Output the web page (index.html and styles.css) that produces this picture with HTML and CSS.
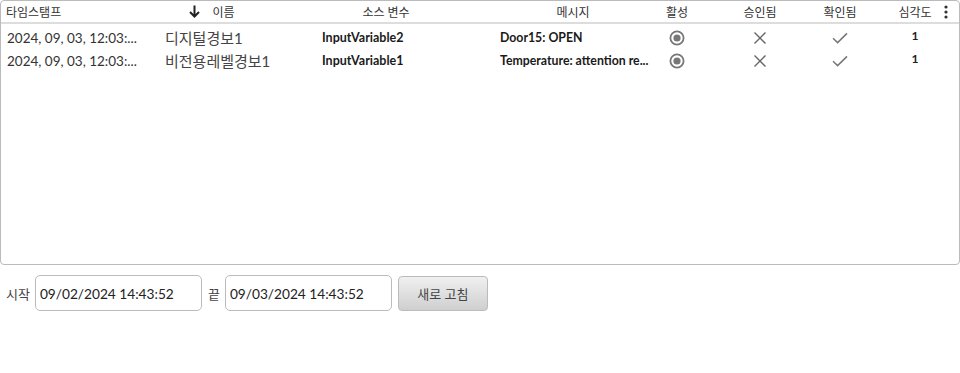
FILE: index.html
```html
<!DOCTYPE html>
<html lang="ko">
<head>
    <meta charset="UTF-8">
    <title>알람 저널</title>
    <link rel="stylesheet" href="styles.css">
</head>
<body>
    <div class="journal">
        <div class="row head">
            <div class="cell h-ts">타임스탬프</div>
            <div class="cell h-name">
                <svg class="arrow" width="11" height="13" viewBox="0 0 11 13"><path d="M5.5 0.5 L5.5 11.5 M1 7 L5.5 11.5 L10 7" stroke="#222" stroke-width="2" fill="none"/></svg>
                이름
            </div>
            <div class="cell h-src">소스 변수</div>
            <div class="cell h-msg">메시지</div>
            <div class="cell center">활성</div>
            <div class="cell center">승인됨</div>
            <div class="cell center">확인됨</div>
            <div class="cell center">심각도</div>
            <span class="kebab">
                <svg width="4" height="14" viewBox="0 0 4 14"><circle cx="2" cy="2" r="1.6" fill="#333"/><circle cx="2" cy="7" r="1.6" fill="#333"/><circle cx="2" cy="12" r="1.6" fill="#333"/></svg>
            </span>
        </div>

        <div class="rows">
            <div class="row">
                <div class="cell ts">2024, 09, 03, 12:03:...</div>
                <div class="cell name">디지털경보1</div>
                <div class="cell src">InputVariable2</div>
                <div class="cell msg">Door15: OPEN</div>
                <div class="cell center">
                    <svg width="16" height="16" viewBox="0 0 16 16"><circle cx="8" cy="8" r="6.6" fill="none" stroke="#777" stroke-width="1.8"/><circle cx="8" cy="8" r="3.6" fill="#777"/></svg>
                </div>
                <div class="cell center">
                    <svg width="14" height="14" viewBox="0 0 14 14"><path d="M1.5 1.5 L12.5 12.5 M12.5 1.5 L1.5 12.5" stroke="#666" stroke-width="1.4" fill="none"/></svg>
                </div>
                <div class="cell center">
                    <svg width="16" height="12" viewBox="0 0 16 12"><path d="M1 6.2 L5.6 10.6 L15 1.4" stroke="#777" stroke-width="1.5" fill="none"/></svg>
                </div>
                <div class="cell center sev">1</div>
            </div>
            <div class="row">
                <div class="cell ts">2024, 09, 03, 12:03:...</div>
                <div class="cell name">비전용레벨경보1</div>
                <div class="cell src">InputVariable1</div>
                <div class="cell msg">Temperature: attention re...</div>
                <div class="cell center">
                    <svg width="16" height="16" viewBox="0 0 16 16"><circle cx="8" cy="8" r="6.6" fill="none" stroke="#777" stroke-width="1.8"/><circle cx="8" cy="8" r="3.6" fill="#777"/></svg>
                </div>
                <div class="cell center">
                    <svg width="14" height="14" viewBox="0 0 14 14"><path d="M1.5 1.5 L12.5 12.5 M12.5 1.5 L1.5 12.5" stroke="#666" stroke-width="1.4" fill="none"/></svg>
                </div>
                <div class="cell center">
                    <svg width="16" height="12" viewBox="0 0 16 12"><path d="M1 6.2 L5.6 10.6 L15 1.4" stroke="#777" stroke-width="1.5" fill="none"/></svg>
                </div>
                <div class="cell center sev">1</div>
            </div>
        </div>
    </div>

    <div class="range">
        <label class="lbl">시작</label>
        <input class="field" type="text" value="09/02/2024 14:43:52">
        <label class="lbl">끝</label>
        <input class="field" type="text" value="09/03/2024 14:43:52">
        <button class="refresh">새로 고침</button>
    </div>
</body>
</html>
```

FILE: styles.css
```css
* {
    margin: 0;
    padding: 0;
    box-sizing: border-box;
}

body {
    font-family: Lato, "Noto Sans CJK KR", sans-serif;
    color: #222;
    background: #fff;
}

.journal {
    width: 960px;
    height: 265px;
    border: 1px solid #bbb;
    border-radius: 4px;
    overflow: hidden;
}

.row {
    display: grid;
    grid-template-columns: 160px 156px 178px 142px 80px 86px 74px 76px;
    height: 23px;
    align-items: center;
}

.row.head {
    position: relative;
    height: 23px;
    border-bottom: 2px solid #ddd;
    font-size: 12px;
    color: #333;
}

.cell {
    display: flex;
    align-items: center;
    white-space: nowrap;
    overflow: hidden;
}

.center {
    justify-content: center;
}

.h-ts {
    padding-left: 5px;
}

.h-name {
    justify-content: center;
    padding-right: 54px;
}

.arrow {
    margin-right: 12px;
}

.h-src {
    justify-content: center;
    padding-right: 40px;
}

.h-msg {
    justify-content: center;
    padding-left: 14px;
}

.kebab {
    position: absolute;
    right: 11px;
    top: 4px;
    display: flex;
}

.rows {
    padding-top: 2px;
}

.ts {
    padding-left: 6px;
    font-size: 13.5px;
    color: #333;
}

.name {
    padding-left: 4px;
    font-size: 15px;
    color: #444;
}

.src {
    padding-left: 5px;
    font-size: 12.5px;
    font-weight: bold;
    color: #1a1a1a;
}

.msg {
    padding-left: 5px;
    font-size: 12.3px;
    font-weight: bold;
    color: #1a1a1a;
    overflow: visible;
}

.sev {
    font-size: 12px;
    font-weight: bold;
    align-self: start;
    padding-top: 2px;
}

.range {
    display: flex;
    align-items: center;
    margin-top: 10px;
    padding-left: 6px;
    height: 36px;
}

.lbl {
    font-size: 13px;
    color: #444;
    margin-right: 5px;
}

.field {
    width: 167px;
    height: 36px;
    border: 1px solid #bbb;
    border-radius: 5px;
    padding-left: 4px;
    font-family: Lato, sans-serif;
    font-size: 13.7px;
    color: #222;
    margin-right: 6px;
}

.refresh {
    width: 90px;
    height: 35px;
    border: 1px solid #bbb;
    border-radius: 4px;
    background: linear-gradient(#f0f0f0, #cfcfcf);
    font-family: Lato, "Noto Sans CJK KR", sans-serif;
    font-size: 13px;
    color: #444;
}
```
